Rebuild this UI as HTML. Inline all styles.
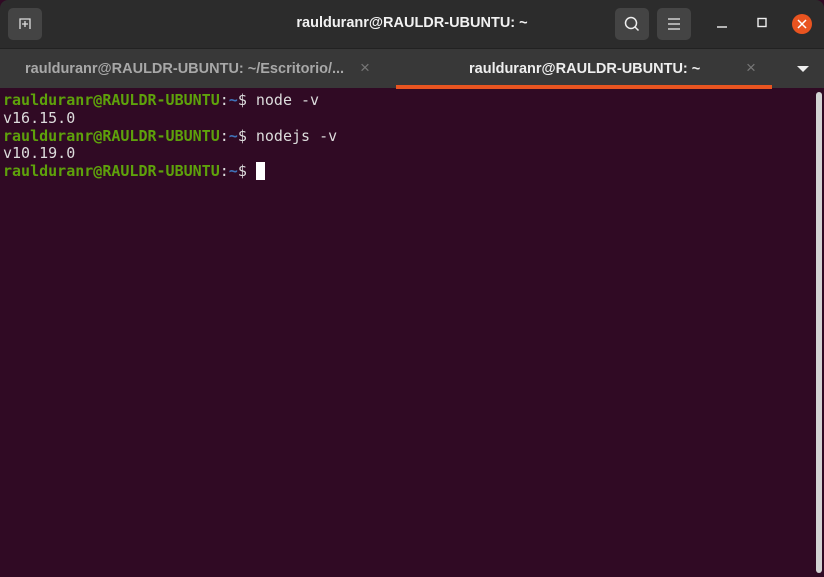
<!DOCTYPE html>
<html><head><meta charset="utf-8"><style>
*{margin:0;padding:0;box-sizing:border-box}
body{width:824px;height:577px;overflow:hidden;background:#300a24;font-family:"Liberation Sans",sans-serif;position:relative}
#title{position:absolute;left:0;top:0;width:824px;height:48px;background:#2c2c2c;border-radius:8px 8px 0 0}
#title .t{position:absolute;left:0;width:824px;top:15px;text-align:center;color:#f2f2f2;font-weight:bold;font-size:14.5px}
.btn{position:absolute;top:8px;width:34px;height:32px;background:#444;border-radius:5px}
#tabs{position:absolute;left:0;top:48px;width:824px;height:40px;background:#383838;border-top:1px solid #222}
.tab{position:absolute;top:12px;font-weight:bold;font-size:14.5px}
.x{position:absolute;top:9px;color:#777;font-size:17px}
#term{position:absolute;left:3px;top:92px;font-family:"DejaVu Sans Mono","Liberation Mono",monospace;font-size:15px;line-height:17.75px;color:#dcdcdc;white-space:pre}
.g{color:#5ea10b;font-weight:bold}.b{color:#3f72b8;font-weight:bold}
</style></head><body>
<div id="title">
<div class="btn" style="left:8px"><svg width="34" height="32"><path d="M12 21V11h10v10M14 16h6M17 13v6" stroke="#ddd" stroke-width="1.3" fill="none"/></svg></div>
<div class="t">raulduranr@RAULDR-UBUNTU: ~</div>
<div class="btn" style="left:615px"><svg width="34" height="32"><circle cx="16" cy="15" r="5.5" stroke="#eee" stroke-width="1.5" fill="none"/><path d="M20 19l3.5 3.5" stroke="#eee" stroke-width="1.5"/></svg></div>
<div class="btn" style="left:657px"><svg width="34" height="32"><path d="M11 11h12M11 16h12M11 21h12" stroke="#eee" stroke-width="1.3"/></svg></div>
<svg style="position:absolute;left:712px;top:14px" width="100" height="22"><path d="M5 13h10" stroke="#eee" stroke-width="1.4"/><rect x="46" y="4.5" width="8" height="8" stroke="#eee" stroke-width="1.4" fill="none"/><circle cx="90" cy="10" r="10" fill="#e95420"/><path d="M86 6l8 8M94 6l-8 8" stroke="#fff" stroke-width="1.5"/></svg>
</div>
<div id="tabs">
<div class="tab" style="left:25px;color:#a8a8a8">raulduranr@RAULDR-UBUNTU: ~/Escritorio/...</div>
<div class="x" style="left:360px">×</div>
<div class="tab" style="left:469px;color:#eee">raulduranr@RAULDR-UBUNTU: ~</div>
<div class="x" style="left:746px">×</div>
<svg style="position:absolute;left:797px;top:17px" width="12" height="8"><path d="M0 0h12L6 6z" fill="#eee"/></svg>
<div style="position:absolute;left:396px;top:36px;width:376px;height:4px;background:#e95420"></div>
</div>
<div style="position:absolute;left:816px;top:92px;width:6px;height:481px;background:#d3d3d3;border-radius:3px"></div>
<div id="term"><span class="g">raulduranr@RAULDR-UBUNTU</span>:<span class="b">~</span>$ node -v
v16.15.0
<span class="g">raulduranr@RAULDR-UBUNTU</span>:<span class="b">~</span>$ nodejs -v
v10.19.0
<span class="g">raulduranr@RAULDR-UBUNTU</span>:<span class="b">~</span>$ <span style="background:#fff">&nbsp;</span></div>
</body></html>
